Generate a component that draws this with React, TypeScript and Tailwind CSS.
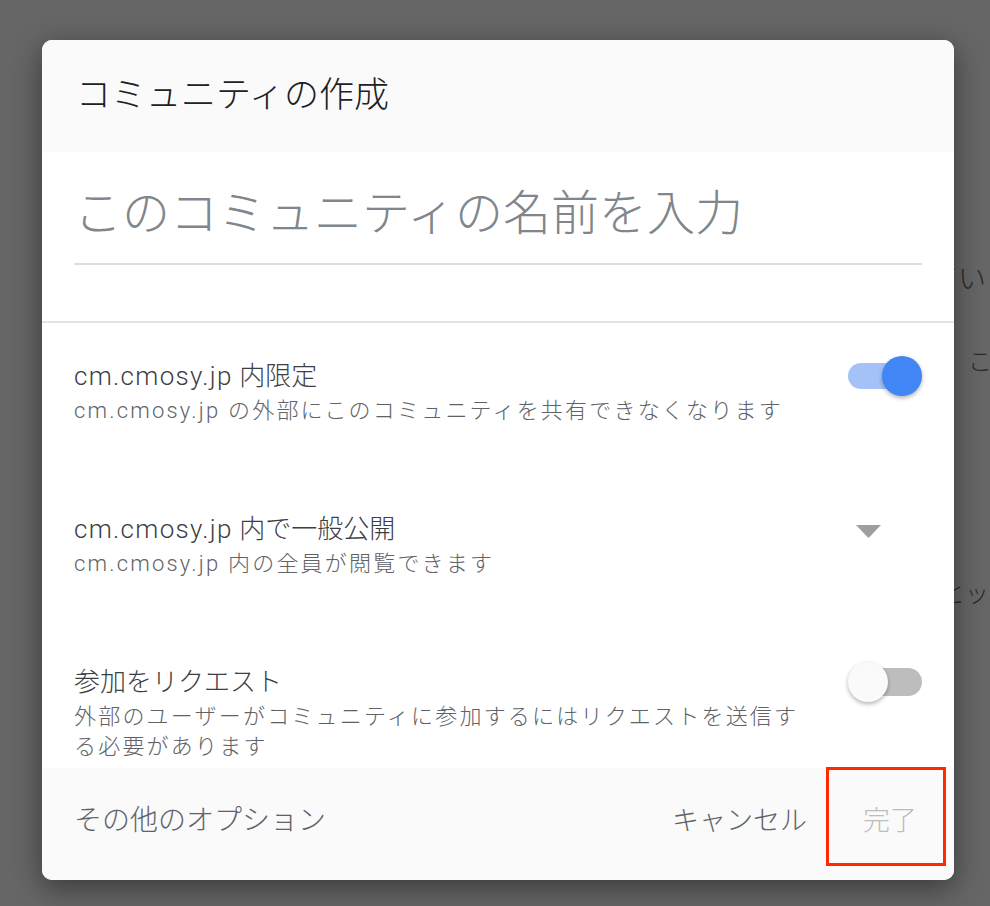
import React from "react";

function Toggle({ on }: { on: boolean }) {
  return (
    <div className="relative w-[74px] h-[34px] flex items-center shrink-0">
      {on ? (
        <>
          <div className="w-[70px] h-[26px] rounded-full bg-[#a4c2f8]" />
          <div className="absolute right-0 top-[-3px] w-[40px] h-[40px] rounded-full bg-[#4285f4] shadow-[0_2px_4px_rgba(0,0,0,0.3)]" />
        </>
      ) : (
        <>
          <div className="ml-[4px] w-[70px] h-[28px] rounded-full bg-[#bdbdbd]" />
          <div className="absolute left-0 top-[-3px] w-[40px] h-[40px] rounded-full bg-[#fafafa] shadow-[0_2px_4px_rgba(0,0,0,0.3)]" />
        </>
      )}
    </div>
  );
}

function Row({
  title,
  sub,
  right,
}: {
  title: React.ReactNode;
  sub: React.ReactNode;
  right: React.ReactNode;
}) {
  return (
    <div className="flex justify-between items-start">
      <div className="w-[745px]">
        <div className="text-[26px] leading-[34px] text-[#3c4043]">{title}</div>
        <div className="mt-[3px] text-[22px] leading-[30px] tracking-[2.2px] text-[#5f6368]">{sub}</div>
      </div>
      {right}
    </div>
  );
}

export default function App() {
  return (
    <div className="relative w-[990px] h-[906px] overflow-hidden bg-[#666666] pt-[40px] pl-[42px] font-light font-['Roboto','Noto_Sans_CJK_JP',sans-serif]">
      <div className="absolute left-[930px] top-[262px] whitespace-nowrap text-[28px] leading-[36px] text-[#2a2a2a]">てい</div>
      <div className="absolute left-[968px] top-[346px] whitespace-nowrap text-[24px] leading-[32px] text-[#2a2a2a]">こ</div>
      <div className="absolute left-[941px] top-[578px] whitespace-nowrap text-[24px] leading-[32px] text-[#2a2a2a]">とッ</div>

      <div className="relative w-[912px] h-[840px] rounded-[10px] bg-white overflow-hidden flex flex-col shadow-[0_8px_30px_rgba(0,0,0,0.45)]">
        <div className="h-[112px] shrink-0 bg-[#fafafa] px-[34px] flex items-center">
          <div className="text-[35px] leading-[44px] text-[#202124]">コミュニティの作成</div>
        </div>

        <div className="h-[171px] shrink-0 border-b-2 border-[#e3e3e3] px-[32px] pt-[33px]">
          <div className="border-b-2 border-[#dedede] pb-[20px]">
            <div className="text-[48px] leading-[58px] text-[#80868b]">このコミュニティの名前を入力</div>
          </div>
        </div>

        <div className="flex-1 px-[32px] pt-[36px] flex flex-col gap-[86px] overflow-hidden">
          <Row
            title={
              <>
                <span className="tracking-[0.05em]">cm.cmosy.jp</span> 内限定
              </>
            }
            sub="cm.cmosy.jp の外部にこのコミュニティを共有できなくなります"
            right={<Toggle on />}
          />
          <Row
            title={
              <>
                <span className="tracking-[0.05em]">cm.cmosy.jp</span> 内で一般公開
              </>
            }
            sub="cm.cmosy.jp 内の全員が閲覧できます"
            right={
              <div className="w-[74px] h-[34px] flex items-center shrink-0">
                <svg width="25" height="13" viewBox="0 0 25 13" className="ml-[8px] mt-[4px]">
                  <polygon points="0,0 25,0 12.5,13" fill="#9e9e9e" />
                </svg>
              </div>
            }
          />
          <Row
            title="参加をリクエスト"
            sub="外部のユーザーがコミュニティに参加するにはリクエストを送信する必要があります"
            right={<Toggle on={false} />}
          />
        </div>

        <div className="h-[112px] shrink-0 bg-[#fafafa] pl-[32px] pr-[37px] pb-[6px] flex items-center">
          <div className="text-[28px] leading-[36px] text-[#5f6368]">その他のオプション</div>
          <div className="ml-auto flex items-center gap-[56px]">
            <div className="text-[27px] leading-[36px] text-[#5f6368]">キャンセル</div>
            <div className="text-[27px] leading-[36px] text-[#bdbdbd]">完了</div>
          </div>
        </div>
      </div>

      <div className="absolute left-[826px] top-[767px] w-[120px] h-[99px] border-[3px] border-[#ff2a00]" />
    </div>
  );
}
